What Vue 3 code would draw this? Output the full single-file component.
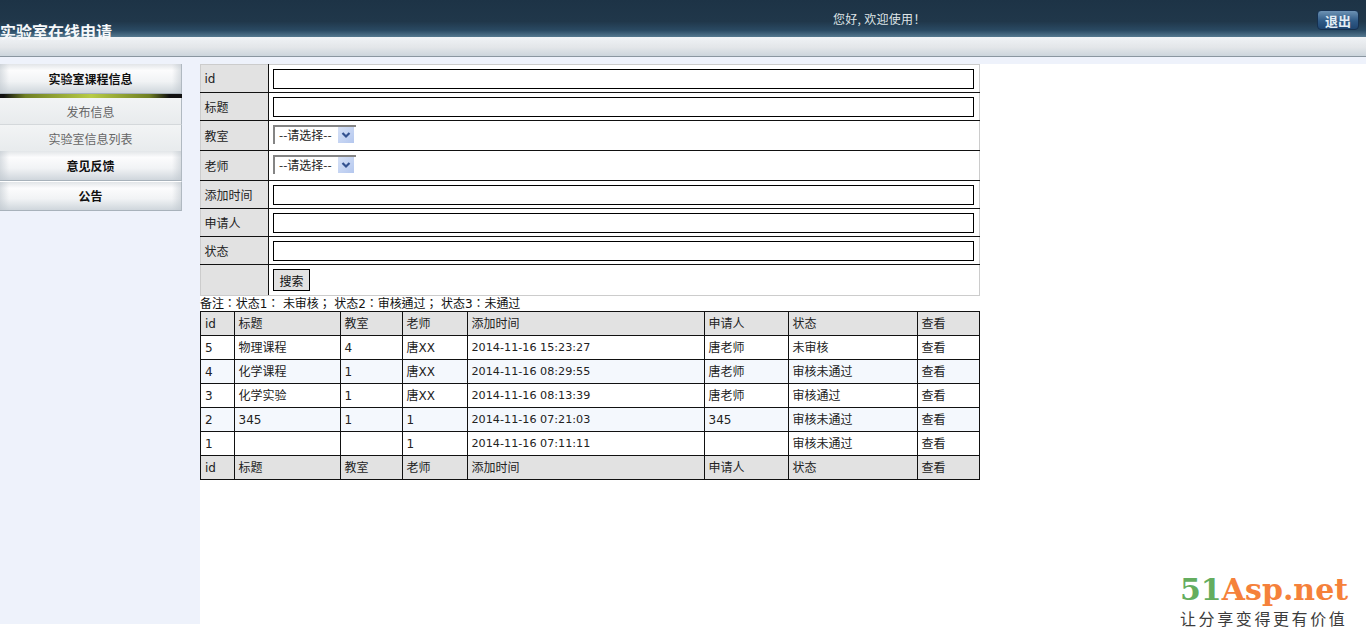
<script setup>
const rows = [
  { id: '5', title: '物理课程', room: '4', teacher: '唐XX', time: '2014-11-16 15:23:27', who: '唐老师', state: '未审核' },
  { id: '4', title: '化学课程', room: '1', teacher: '唐XX', time: '2014-11-16 08:29:55', who: '唐老师', state: '审核未通过' },
  { id: '3', title: '化学实验', room: '1', teacher: '唐XX', time: '2014-11-16 08:13:39', who: '唐老师', state: '审核通过' },
  { id: '2', title: '345', room: '1', teacher: '1', time: '2014-11-16 07:21:03', who: '345', state: '审核未通过' },
  { id: '1', title: '', room: '', teacher: '1', time: '2014-11-16 07:11:11', who: '', state: '审核未通过' }
]
const heads = ['id', '标题', '教室', '老师', '添加时间', '申请人', '状态', '查看']
</script>

<template>
  <div class="page">
    <header class="top">
      <h1 class="brand">实验室在线申请</h1>
      <span class="hello">您好, 欢迎使用！</span>
      <button class="logout">退出</button>
    </header>
    <div class="subbar"></div>
    <div class="strip"></div>
    <div class="main">
      <aside class="side">
        <div class="menu-head first">实验室课程信息</div>
        <div class="glow"></div>
        <div class="sub-item line">发布信息</div>
        <div class="sub-item">实验室信息列表</div>
        <div class="menu-head second">意见反馈</div>
        <div class="menu-head third">公告</div>
      </aside>
      <section class="content">
        <table class="form">
          <colgroup><col class="lab" /><col /></colgroup>
          <tbody>
            <tr class="r28"><th>id</th><td><input /></td></tr>
            <tr class="r28"><th>标题</th><td><input /></td></tr>
            <tr class="r30"><th>教室</th><td><span class="sel">--请选择--<i class="arrow"><svg width="16" height="16" viewBox="0 0 16 16"><path d="M4.500 6 8 9.500 11.500 6" fill="none" stroke="#33518f" stroke-width="2.200"/></svg></i></span></td></tr>
            <tr class="r30"><th>老师</th><td><span class="sel">--请选择--<i class="arrow"><svg width="16" height="16" viewBox="0 0 16 16"><path d="M4.500 6 8 9.500 11.500 6" fill="none" stroke="#33518f" stroke-width="2.200"/></svg></i></span></td></tr>
            <tr class="r28"><th>添加时间</th><td><input /></td></tr>
            <tr class="r28"><th>申请人</th><td><input /></td></tr>
            <tr class="r28"><th>状态</th><td><input /></td></tr>
            <tr class="r31 last"><th></th><td><button class="search">搜索</button></td></tr>
          </tbody>
        </table>
        <div class="note">备注：状态1： 未审核； 状态2：审核通过； 状态3：未通过</div>
        <table class="list">
          <colgroup>
            <col style="width:34px" /><col style="width:106px" /><col style="width:62px" /><col style="width:65px" />
            <col style="width:237px" /><col style="width:84px" /><col style="width:129px" /><col style="width:62px" />
          </colgroup>
          <thead><tr><th v-for="h in heads" :key="h">{{ h }}</th></tr></thead>
          <tbody>
            <tr v-for="(r, i) in rows" :key="r.id" :class="{ alt: i % 2 === 1 }">
              <td>{{ r.id }}</td><td>{{ r.title }}</td><td>{{ r.room }}</td><td>{{ r.teacher }}</td>
              <td class="time">{{ r.time }}</td><td>{{ r.who }}</td><td>{{ r.state }}</td><td>查看</td>
            </tr>
          </tbody>
          <tfoot><tr><th v-for="h in heads" :key="h">{{ h }}</th></tr></tfoot>
        </table>
      </section>
    </div>
    <div class="mark">
      <div class="mark-top"><span class="g">51</span><span class="o">Asp.net</span></div>
      <div class="mark-sub">让分享变得更有价值</div>
    </div>
  </div>
</template>

<style>
html, body { margin: 0; background: #fff; }
</style>

<style scoped>
.page {
  position: relative;
  height: 643px;
  overflow: hidden;
  font: 12px "DejaVu Sans", "Noto Sans CJK SC", sans-serif;
  color: #222;
}
.top {
  height: 37px;
  position: relative;
  background: linear-gradient(#1d3346 0, #20374a 58%, #2a4a63 82%, #54788f 100%);
}
.brand {
  margin: 0;
  position: absolute;
  left: 0;
  top: 21px;
  font: bold 16px/20px "Noto Sans CJK SC", sans-serif;
  color: #f6f8fa;
}
.hello {
  position: absolute;
  left: 833px;
  top: 11px;
  font: 12px/16px "Noto Sans CJK SC", sans-serif;
  letter-spacing: .3px;
  color: #dfe5e8;
}
.logout {
  position: absolute;
  left: 1317px;
  top: 10px;
  width: 42px;
  height: 20px;
  padding: 0;
  border: 1px solid #16304f;
  border-radius: 4px;
  background: linear-gradient(#6d92b4, #2f5a86 55%, #1f4570);
  color: #e3edf5;
  font: bold 13px/17px "Noto Sans CJK SC", sans-serif;
}
.subbar {
  height: 19px;
  background: linear-gradient(#f0f3f6, #e3e6e9 55%, #ccd5dc);
  border-bottom: 1px solid #8a96a0;
}
.strip { height: 7px; background: #eef2fb; }
.main { display: flex; }
.side {
  width: 200px;
  height: 560px;
  background: #eef2fb;
  box-sizing: border-box;
}
.menu-head, .sub-item, .glow { width: 182px; box-sizing: border-box; }
.menu-head {
  text-align: center;
  font: bold 12px "Noto Sans CJK SC", sans-serif;
  color: #111;
  background: linear-gradient(90deg, rgba(190,198,205,.55), rgba(255,255,255,0) 5%, rgba(255,255,255,0) 95%, rgba(190,198,205,.55)), linear-gradient(#e2e5e8, #fcfcfd 22%, #f1f3f5 60%, #cfd6dc);
  border-bottom: 1px solid #a8b2bb;
  border-right: 1px solid #b0b9c1;
}
.first { height: 30px; line-height: 30px; }
.second { height: 30px; line-height: 30px; }
.third { height: 30px; line-height: 28px; border-top: 1px solid #fff; }
.glow {
  height: 4px;
  background: linear-gradient(90deg, #111 2%, #6f7f24 14%, #b7cb45 50%, #6f7f24 82%, #111 93%);
}
.sub-item {
  height: 26px;
  text-align: center;
  font: 12px/27px "Noto Sans CJK SC", sans-serif;
  color: #666;
  background: linear-gradient(#f2f4f5, #e8ebed);
  border-right: 1px solid #b0b9c1;
}
.sub-item.line { height: 27px; line-height: 28px; border-bottom: 1px solid #d4d8db; }
.content { width: 780px; }
table { border-collapse: collapse; table-layout: fixed; }
.form { width: 780px; }
.lab { width: 68px; }
.form th, .form td {
  padding: 0 4px;
  border: 1px solid #111;
  border-left: 0;
  text-align: left;
  font-weight: normal;
  height: 0;
}
.form th { background: #e2e2e2; padding-left: 3.500px; }
.form tr:first-child th, .form tr:first-child td { border-top: 1px solid #ccc; }
.form td { border-right: 1px solid #ccc; background: #fff; }
.form .last th, .form .last td { border-bottom: 1px solid #ccc; }
.form th { border-left: 1px solid #ccc; }
.r28 th, .r28 td { height: 27px; }
.r30 th, .r30 td { height: 29px; }
.r31 th, .r31 td { height: 30px; }
.form input {
  display: block;
  box-sizing: border-box;
  width: 701px;
  height: 20px;
  border: 1px solid #000;
  padding: 0;
  margin: 0;
  border-radius: 0;
  background: #fff;
}
.sel {
  display: inline-flex;
  align-items: center;
  box-sizing: border-box;
  width: 83px;
  height: 19px;
  margin-bottom: 3px;
  padding-left: 4px;
  padding-bottom: 1px;
  border-top: 2px solid #848484;
  border-left: 2px solid #848484;
  background: #fff;
  vertical-align: middle;
  font: 12px "Noto Sans CJK SC", sans-serif;
  color: #222;
  gap: 6px;
}
.arrow {
  display: block;
  width: 16px;
  height: 16px;
  background: linear-gradient(135deg, #d7e2f7, #b4c7ee);
}
.arrow svg { display: block; }
.search {
  display: block;
  box-sizing: border-box;
  width: 37px;
  height: 22px;
  border: 1px solid #000;
  padding: 0;
  border-radius: 0;
  background: #e2e2e2;
  color: #111;
  font: 12px "Noto Sans CJK SC", sans-serif;
}
.note {
  height: 15px;
  font: 12px/17px "DejaVu Sans", "Noto Sans CJK TC", sans-serif;
  letter-spacing: -.07px;
  color: #111;
  white-space: nowrap;
}
.list { width: 779px; }
.list th, .list td {
  height: 23px;
  padding: 0 4px 0 3.500px;
  border: 1px solid #111;
  text-align: left;
  font-weight: normal;
  font-size: 12px;
  line-height: 16px;
  white-space: nowrap;
  color: #222;
}
.list th:first-child, .list td:first-child { padding-left: 4px; }
.list td.time { font-size: 11.200px; }
.list th { background: #e2e2e2; }
.list .alt td { background: #f4f8fd; }
.mark {
  position: absolute;
  left: 1180px;
  top: 571px;
  width: 180px;
}
.mark-top {
  font: bold 30px/38px "DejaVu Serif", serif;
  white-space: nowrap;
}
.g { color: #64ad5f; }
.o { color: #f5813a; }
.mark-sub {
  font: 16px/20px "Noto Sans CJK SC", sans-serif;
  color: #3c3c3c;
  letter-spacing: 2.600px;
  white-space: nowrap;
  margin-top: -1px;
}
</style>
